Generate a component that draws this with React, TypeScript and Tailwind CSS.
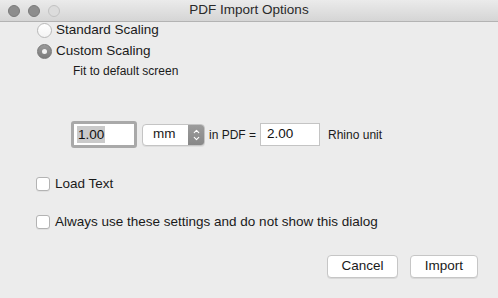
import { ChevronUp, ChevronDown } from 'lucide-react';

const font = { fontFamily: '"Liberation Sans", Arial, sans-serif' };

function Radio({ checked, label }: { checked?: boolean; label: string }) {
  return (
    <div className="flex items-center h-[17px] ml-[1px]">
      {checked ? (
        <div className="w-[15px] h-[15px] rounded-full bg-gradient-to-b from-[#9a9a9a] to-[#7c7c7c] border border-[#777] flex items-center justify-center">
          <div className="w-[5px] h-[5px] rounded-full bg-[#f2f2f2]" />
        </div>
      ) : (
        <div className="w-[15px] h-[15px] rounded-full bg-gradient-to-b from-white to-[#f4f4f4] border border-[#b8b8b8]" />
      )}
      <span className="ml-[4px] text-[13.5px] text-[#1a1a1a]">{label}</span>
    </div>
  );
}

function Checkbox({ label }: { label: string }) {
  return (
    <div className="flex items-center h-[16px]">
      <div className="w-[14px] h-[14px] rounded-[3px] bg-white border border-[#b3b3b3] shadow-[0_1px_0_rgba(0,0,0,0.05)]" />
      <span className="ml-[5px] text-[13.5px] text-[#1a1a1a]">{label}</span>
    </div>
  );
}

export default function App() {
  return (
    <div className="w-[498px] h-[298px] bg-[#ececec] overflow-hidden flex flex-col" style={font}>
      {/* Title bar */}
      <div className="h-[22px] flex items-center relative bg-gradient-to-b from-[#ebebeb] to-[#d5d5d5] border-b border-[#b3b3b3]">
        <div className="flex items-center gap-[8px] pl-[8px]">
          <div className="w-[12px] h-[12px] rounded-full bg-[#8d8d8d] border border-[#7a7a7a]" />
          <div className="w-[12px] h-[12px] rounded-full bg-[#8d8d8d] border border-[#7a7a7a]" />
          <div className="w-[12px] h-[12px] rounded-full bg-[#dcdcdc] border border-[#c2c2c2]" />
        </div>
        <div className="absolute inset-0 flex items-center justify-center text-[13.5px] text-[#2a2a2a]">
          PDF Import Options
        </div>
      </div>

      {/* Body */}
      <div className="flex flex-col pl-[36px]">
        <div className="mt-[0px]">
          <Radio label="Standard Scaling" />
        </div>
        <div className="mt-[4px]">
          <Radio checked label="Custom Scaling" />
        </div>
        <div className="h-[16px] mt-[3px] pl-[37px] flex items-center text-[12px] text-[#1a1a1a]">
          Fit to default screen
        </div>

        {/* Scale row */}
        <div className="flex items-center mt-[42px] ml-[35px] h-[27px]">
          <div className="w-[66px] h-[27px] rounded-[3px] border-[3px] border-[#a9a9a9] bg-white flex items-center">
            <span className="ml-[3px] px-[1px] bg-[#cacaca] text-[13.5px] text-[#111] leading-[17px]">1.00</span>
          </div>
          <div className="ml-[5px] w-[63px] h-[22px] rounded-[4px] border border-[#c4c4c4] bg-white flex items-stretch overflow-hidden shadow-[0_1px_0_rgba(0,0,0,0.06)]">
            <span className="flex-1 flex items-center pl-[10px] text-[13.5px] text-[#1a1a1a]">mm</span>
            <div className="w-[16px] bg-gradient-to-b from-[#9c9c9c] to-[#878787] flex flex-col items-center justify-center">
              <ChevronUp size={9} strokeWidth={3} className="text-white -mb-[2px]" />
              <ChevronDown size={9} strokeWidth={3} className="text-white" />
            </div>
          </div>
          <span className="ml-[4px] text-[12px] text-[#1a1a1a]">in PDF =</span>
          <div className="ml-[4px] w-[60px] h-[23px] border border-[#c4c4c4] bg-white flex items-center">
            <span className="ml-[6px] text-[13.5px] text-[#111]">2.00</span>
          </div>
          <span className="ml-[8px] text-[12px] text-[#1a1a1a]">Rhino unit</span>
        </div>

        <div className="mt-[28px]">
          <Checkbox label="Load Text" />
        </div>
        <div className="mt-[22px]">
          <Checkbox label="Always use these settings and do not show this dialog" />
        </div>
      </div>

      {/* Buttons */}
      <div className="flex justify-end gap-[12px] pr-[20px] mt-[25px]">
        <button className="w-[71px] h-[23px] rounded-[4px] bg-white border border-[#c6c6c6] shadow-[0_1px_0_rgba(0,0,0,0.08)] text-[13.5px] text-[#1a1a1a]">
          Cancel
        </button>
        <button className="w-[68px] h-[23px] rounded-[4px] bg-white border border-[#c6c6c6] shadow-[0_1px_0_rgba(0,0,0,0.08)] text-[13.5px] text-[#1a1a1a]">
          Import
        </button>
      </div>
    </div>
  );
}
